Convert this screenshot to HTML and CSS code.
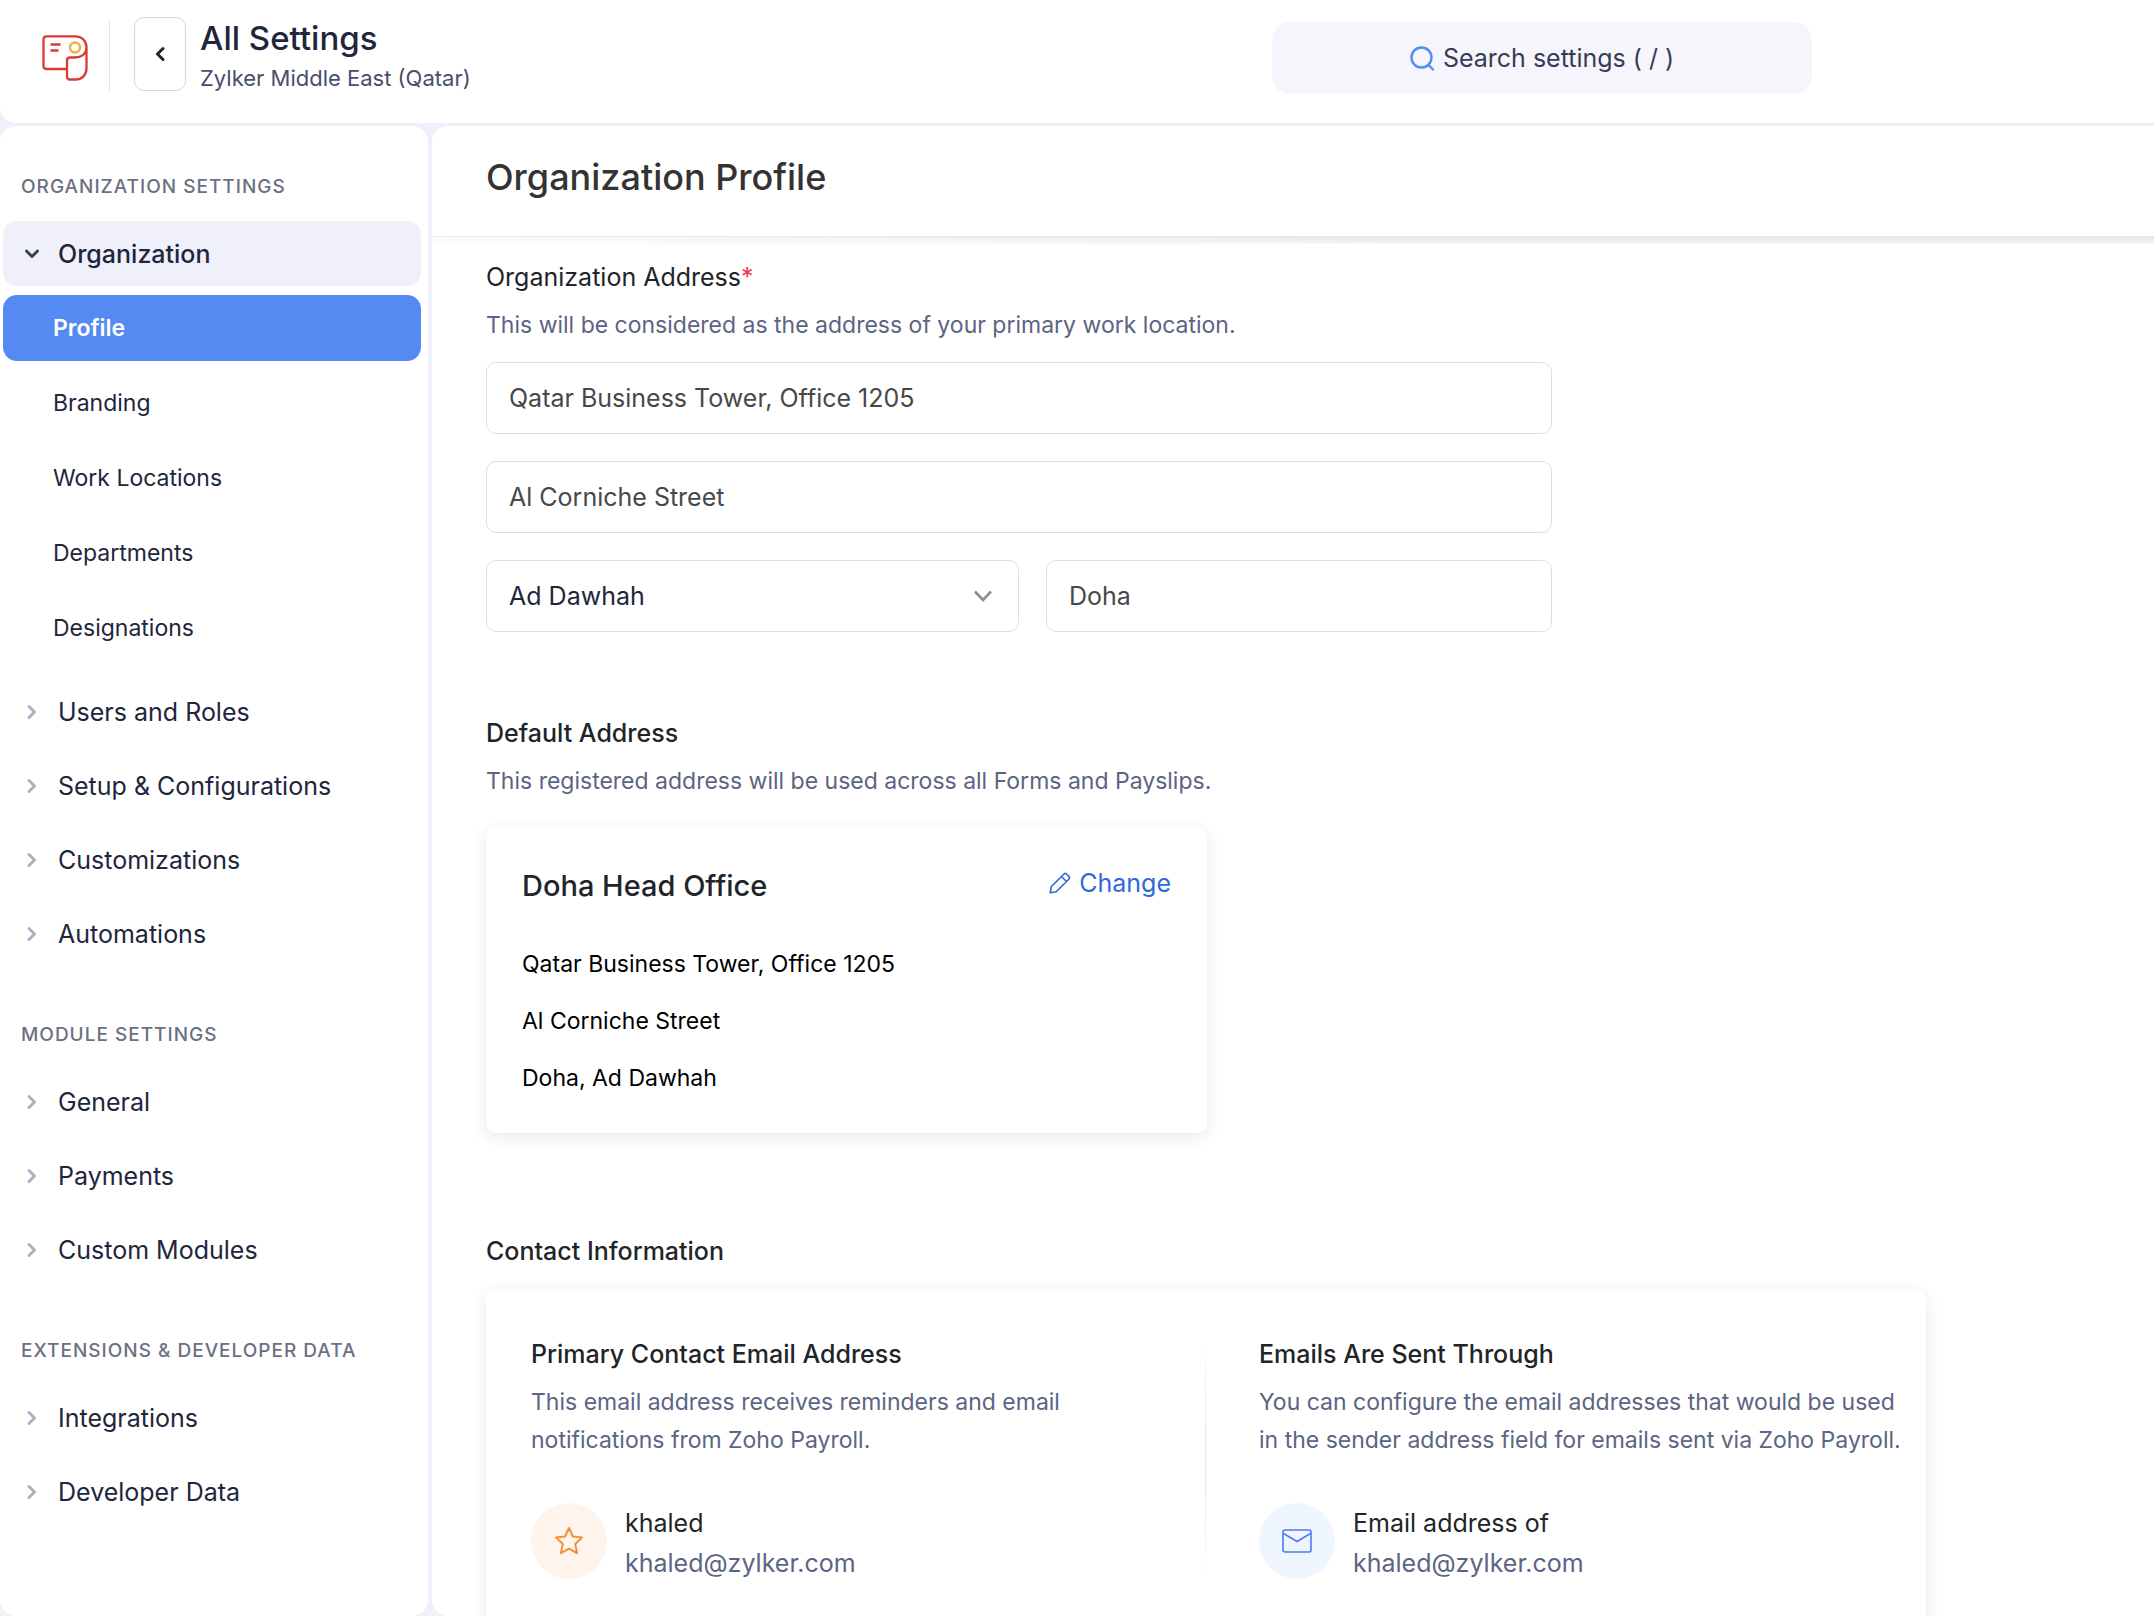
FILE: index.html
```html
<!DOCTYPE html>
<html lang="en">
<head>
<meta charset="utf-8">
<title>All Settings - Organization Profile</title>
<meta name="viewport" content="width=device-width, initial-scale=1">
<link rel="stylesheet" href="styles.css">
</head>
<body>
<svg class="sprite" aria-hidden="true">
  <symbol id="chevron" viewBox="0 0 10 16"><path d="M2 2.500l5.500 5.500L2 13.500" fill="none" stroke="currentColor" stroke-width="3" stroke-linecap="round" stroke-linejoin="round"/></symbol>
</svg>
<div class="app">
  <header class="topbar">
    <a class="logo" href="#" aria-label="Payroll home">
      <svg width="46" height="46" viewBox="0 0 46 46" fill="none" stroke="#d93a35" stroke-width="2.300" stroke-linejoin="round">
        <path d="M25 34H4.500C2.500 34 1.500 33 1.500 31V4.500C1.500 2.500 2.500 1.300 4.500 1.300H33C40 1.300 44.500 6 44.500 12.500V33C44.500 40 40 44.500 34 44.500H28C26 44.500 25 43.500 25 41.500V25.500C25 23.500 26 22.500 28 22.500H33C40 22.500 44.500 18.500 44.500 12.500"/>
        <path d="M8.500 9.500h10M8.500 15.500h8" stroke-width="2.400"/>
        <circle cx="33" cy="12.500" r="5" stroke="#eeb13f" stroke-width="2.400"/>
      </svg>
    </a>
    <button class="back" type="button" aria-label="Back">
      <svg width="10" height="16" viewBox="0 0 10 16"><path d="M8 2.500L2.500 8 8 13.500" fill="none" stroke="currentColor" stroke-width="3" stroke-linecap="round" stroke-linejoin="round"/></svg>
    </button>
    <div class="heading">
      <h1>All Settings</h1>
      <p>Zylker Middle East (Qatar)</p>
    </div>
    <button class="search" type="button">
      <svg width="25" height="25" viewBox="0 0 25 25" fill="none" stroke="#548cf4" stroke-width="2.400" stroke-linecap="round"><circle cx="11.500" cy="11.500" r="10"/><path d="M18.500 19l4.500 4.500"/></svg>
      Search settings ( / )
    </button>
  </header>

  <nav class="sidebar" aria-label="Settings">
    <h2>ORGANIZATION SETTINGS</h2>
    <ul class="groups">
      <li>
        <a class="group open" href="#"><svg class="chev"><use href="#chevron"/></svg>Organization</a>
        <ul class="pages">
          <li><a class="current" href="#" aria-current="page">Profile</a></li>
          <li><a href="#">Branding</a></li>
          <li><a href="#">Work Locations</a></li>
          <li><a href="#">Departments</a></li>
          <li><a href="#">Designations</a></li>
        </ul>
      </li>
      <li><a class="group" href="#"><svg class="chev"><use href="#chevron"/></svg>Users and Roles</a></li>
      <li><a class="group" href="#"><svg class="chev"><use href="#chevron"/></svg>Setup &amp; Configurations</a></li>
      <li><a class="group" href="#"><svg class="chev"><use href="#chevron"/></svg>Customizations</a></li>
      <li><a class="group" href="#"><svg class="chev"><use href="#chevron"/></svg>Automations</a></li>
    </ul>
    <h2>MODULE SETTINGS</h2>
    <ul class="groups">
      <li><a class="group" href="#"><svg class="chev"><use href="#chevron"/></svg>General</a></li>
      <li><a class="group" href="#"><svg class="chev"><use href="#chevron"/></svg>Payments</a></li>
      <li><a class="group" href="#"><svg class="chev"><use href="#chevron"/></svg>Custom Modules</a></li>
    </ul>
    <h2>EXTENSIONS &amp; DEVELOPER DATA</h2>
    <ul class="groups">
      <li><a class="group" href="#"><svg class="chev"><use href="#chevron"/></svg>Integrations</a></li>
      <li><a class="group" href="#"><svg class="chev"><use href="#chevron"/></svg>Developer Data</a></li>
    </ul>
  </nav>

  <main class="main">
    <h2 class="page-title">Organization Profile</h2>
    <div class="content">
      <form class="address">
        <label class="label" for="street1">Organization Address<span class="required">*</span></label>
        <p class="hint">This will be considered as the address of your primary work location.</p>
        <div class="fields">
          <input class="field" id="street1" type="text" value="Qatar Business Tower, Office 1205">
          <input class="field" type="text" aria-label="Street 2" value="Al Corniche Street">
          <div class="pair">
            <div class="select">
              <select class="field" aria-label="Municipality"><option>Ad Dawhah</option></select>
              <svg width="20" height="14" viewBox="0 0 20 14"><path d="M2 2.500l8 8.500 8-8.500" fill="none" stroke="#8d8f94" stroke-width="2.600"/></svg>
            </div>
            <input class="field" type="text" aria-label="City" value="Doha">
          </div>
        </div>
      </form>

      <section class="block">
        <h3>Default Address</h3>
        <p class="hint">This registered address will be used across all Forms and Payslips.</p>
        <div class="card office">
          <div class="office-head">
            <h4>Doha Head Office</h4>
            <a class="change" href="#">
              <svg width="22" height="22" viewBox="0 0 22 22" fill="none" stroke="currentColor" stroke-width="1.600" stroke-linejoin="round"><path d="M1.200 20.800l1-6L15 2q1.200-1.200 2.400 0l2.600 2.600q1.200 1.200 0 2.400L7.200 19.800zM12.500 4.500l5 5"/></svg>
              Change
            </a>
          </div>
          <address>
            <p>Qatar Business Tower, Office 1205</p>
            <p>Al Corniche Street</p>
            <p>Doha, Ad Dawhah</p>
          </address>
        </div>
      </section>

      <section class="block contact">
        <h3>Contact Information</h3>
        <div class="card contacts">
          <div class="contact-col">
            <h4>Primary Contact Email Address</h4>
            <p class="hint">This email address receives reminders and email<br>notifications from Zoho Payroll.</p>
            <div class="person">
              <span class="badge star"><svg width="30" height="30" viewBox="0 0 30 30" fill="none" stroke="#f0903c" stroke-width="2" stroke-linejoin="round"><path d="M15 2l3.900 8.500 9.100 1.100-6.800 6.300 1.900 9.300L15 22.600l-8.100 4.600 1.900-9.300L2 11.600l9.100-1.100z"/></svg></span>
              <div><p class="name">khaled</p><p class="mail">khaled@zylker.com</p></div>
            </div>
          </div>
          <div class="contact-col">
            <h4>Emails Are Sent Through</h4>
            <p class="hint">You can configure the email addresses that would be used<br>in the sender address field for emails sent via Zoho Payroll.</p>
            <div class="person">
              <span class="badge envelope"><svg width="30" height="24" viewBox="0 0 30 24" fill="none" stroke="#4a7bf0" stroke-width="1.600" stroke-linejoin="round"><rect x="1" y="1" width="28" height="22" rx="2"/><path d="M1.500 4.500L15 12.500l13.500-8"/></svg></span>
              <div><p class="name">Email address of</p><p class="mail">khaled@zylker.com</p></div>
            </div>
          </div>
        </div>
      </section>
    </div>
  </main>
</div>
</body>
</html>
```
FILE: styles.css
```css
* { box-sizing: border-box; margin: 0; padding: 0; }
body { background: #fff; color: #212529; font-family: Inter, "Liberation Sans", sans-serif; font-size: 25px; }
ul { list-style: none; }
a { color: inherit; text-decoration: none; }
button, input, select { font: inherit; color: inherit; }
h1, h2, h3, h4 { font-weight: 500; }
svg { flex: none; }
.sprite { position: absolute; width: 0; height: 0; }

.app {
  display: grid;
  grid-template: 123px minmax(0, 1fr) / 428px minmax(0, 1fr);
  gap: 3px 4px;
  height: calc(100vh - 2px);
  background: #f0f0fa;
}

/* Top bar */
.topbar { grid-column: 1 / -1; display: flex; align-items: flex-start; background: #fff; border-radius: 0 0 0 16px; }
.logo { display: flex; align-items: center; margin-top: 20px; padding: 3px 21px 0 42px; height: 72px; border-right: 1px solid #e4e4ea; }
.back { display: grid; place-items: center; width: 52px; height: 74px; margin: 17px 14px 0 24px; background: #fff; border: 1px solid #d5d5e2; border-radius: 10px; color: #212529; }
.heading { padding-top: 18px; }
.heading h1 { font-size: 33px; line-height: 40px; color: #21263c; }
.heading p { font-size: 22px; line-height: 40px; color: #484e6b; }
.search { display: flex; align-items: center; justify-content: center; gap: 8px; width: 540px; height: 72px; margin: 22px 342px 0 auto; background: #f6f5fc; border: 0; border-radius: 18px; color: #363c55; }

/* Sidebar */
.sidebar { padding: 49px 7px 0 3px; overflow: hidden; background: #fff; border-radius: 16px; color: #21263c; }
.sidebar h2 { padding-left: 18px; margin-bottom: 22px; font-size: 19px; line-height: 24px; letter-spacing: 1px; color: #6c7083; }
.groups + h2 { margin-top: 57px; }
.groups { display: grid; gap: 9px; }
.group { display: flex; align-items: center; gap: 18px; height: 65px; padding-left: 21px; border-radius: 14px; }
.chev { width: 16px; height: 16px; color: #b0aec2; }
.group.open { background: #f0f0fa; font-weight: 500; }
.group.open .chev { transform: rotate(90deg); color: #3a3f58; }
.pages { display: grid; gap: 9px; padding: 9px 0; font-size: 23px; }
.pages a { display: flex; align-items: center; height: 66px; padding-left: 50px; border-radius: 14px; }
.pages .current { background: #548af2; color: #fff; font-weight: 600; }

/* Page */
.main { display: flex; flex-direction: column; overflow: hidden; background: #fff; border-radius: 16px 0 0 16px; }
.page-title { padding: 27px 54px 35px; font-size: 36px; line-height: 48px; color: #333; }
.content { flex: 1; padding: 21px 54px 0; overflow: hidden; background: linear-gradient(90deg, #fffc, #fff0 60%) 0 0 / 100% 7px no-repeat, linear-gradient(#e6e6e6, #f6f6f6) 0 0 / 100% 7px no-repeat; border-top: 1px solid #e9e9e9; }
.label, .block h3 { display: block; font-size: 25px; line-height: 38px; }
.required { color: #f0384c; }
.hint { font-size: 23px; line-height: 38px; color: #5b6482; }
.label + .hint, .block h3 + .hint { margin-top: 10px; }
.fields { display: grid; gap: 27px; max-width: 1066px; margin-top: 18px; }
.pair { display: grid; grid-template-columns: 533fr 506fr; gap: 27px; }
.field { width: 100%; height: 72px; padding: 0 22px; background: #fff; border: 1px solid #dddee2; border-radius: 10px; color: #484848; }
.select { display: grid; align-items: center; }
.select > * { grid-area: 1 / 1; }
.select .field { appearance: none; color: #21263c; }
.select svg { justify-self: end; margin-right: 26px; pointer-events: none; }

.block { margin-top: 82px; }
.contact { margin-top: 99px; }
.card { border-radius: 10px; background: #fff; box-shadow: 0 4px 16px #2126401a; }
.office { max-width: 721px; margin-top: 27px; padding: 35px 36px 36px; }
.office-head { display: flex; justify-content: space-between; align-items: flex-start; }
.office h4 { font-size: 29px; line-height: 48px; }
.change { display: flex; align-items: center; gap: 8px; line-height: 42px; color: #2f69dc; }
address { display: grid; gap: 19px; margin-top: 35px; font-size: 23px; line-height: 38px; font-style: normal; color: #000; }
.contacts { display: grid; grid-template-columns: 1fr 1fr; max-width: 1440px; height: 400px; margin-top: 19px; padding: 46px 0; }
.contact-col { padding: 0 8px 0 53px; }
.contact-col:first-child { padding-left: 45px; border-right: 1px solid; border-image: linear-gradient(#fff, #e8e8ee 30%, #e8e8ee 50%, #fff 80%) 1; }
.contact-col h4 { margin-bottom: 10px; font-size: 25px; line-height: 38px; }
.person { display: flex; align-items: flex-start; gap: 18px; margin-top: 44px; }
.badge { display: grid; place-items: center; width: 76px; height: 76px; border-radius: 50%; }
.star { background: #fef4eb; }
.envelope { background: #eff6ff; }
.person p { line-height: 40px; }
.mail { color: #5b6482; }
```
